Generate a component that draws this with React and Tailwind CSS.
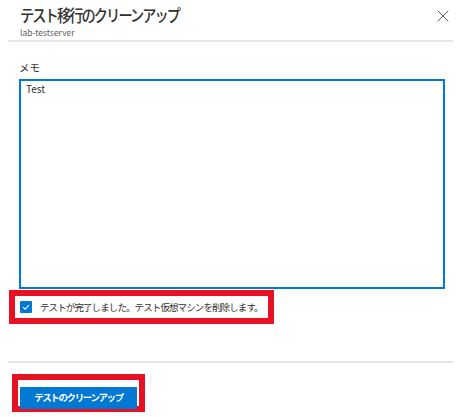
import { X } from 'lucide-react'

const FONT = { fontFamily: '"Noto Sans CJK JP", "Noto Sans", sans-serif' }

export default function App() {
    return (
        <div className="relative w-[461px] h-[417px] bg-white overflow-hidden text-[#323130]" style={FONT}>
            {/* Header */}
            <header className="pl-[20px] pt-[5px] h-[40px]">
                <h1 className="text-[16.5px] leading-[21px] font-medium tracking-[-2.2px] whitespace-nowrap origin-left scale-x-[0.86]">テスト移行のクリーンアップ</h1>
                <p className="mt-[1px] text-[8.5px] leading-[11px] text-[#605e5c]">lab-testserver</p>
            </header>
            <button className="absolute right-[8px] top-[6px] text-[#323130]">
                <X className="w-[20px] h-[20px]" strokeWidth={1} />
            </button>
            <div className="mx-[8px] h-[2px] bg-[#e5e5e5]" />

            {/* Body */}
            <main className="px-[19px] pt-[18px]">
                <label className="block text-[10.5px] leading-[16px] mb-[3px]">メモ</label>
                <div className="w-[426px] h-[210px] border-2 border-[#0078d4] px-[5px] pt-[1px]">
                    <span className="block text-[10px] leading-[14px]">Test</span>
                </div>
            </main>

            {/* Checkbox (highlighted) */}
            <div className="ml-[9px] mt-[1px] w-[265px] h-[34px] border-[6px] border-[#e81123] flex items-center pl-[5px] gap-[8px]">
                <span className="w-[12px] h-[12px] shrink-0 bg-[#0078d4] rounded-[1px] flex items-center justify-center">
                    <svg viewBox="0 0 12 12" className="w-[10px] h-[10px]">
                        <path d="M2.5 6.2 L5 8.6 L9.6 3.6" fill="none" stroke="#fff" strokeWidth="1.3" />
                    </svg>
                </span>
                <span className="whitespace-nowrap text-[9.5px] leading-[14px] text-[#323130] tracking-[-0.9px]">テストが完了しました。テスト仮想マシンを削除します。</span>
            </div>

            <div className="mx-[8px] mt-[37px] h-[2px] bg-[#e5e5e5]" />

            {/* Footer button (highlighted) */}
            <div className="ml-[12px] mt-[11px] w-[133px] h-[38px] border-[6px] border-[#e81123] p-[2px]">
                <button className="w-full h-full bg-[#0078d4] text-white text-[9.5px] font-bold leading-none tracking-[-1.4px] whitespace-nowrap">
                    テストのクリーンアップ
                </button>
            </div>
        </div>
    )
}
